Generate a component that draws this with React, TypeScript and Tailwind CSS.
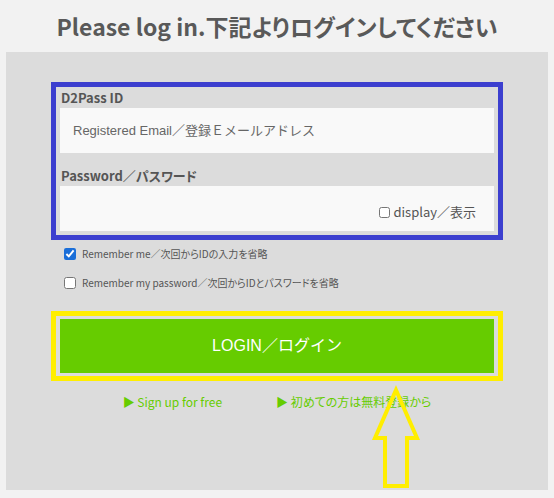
export default function App() {
  const jp = { fontFamily: '"Noto Sans CJK JP", sans-serif' };
  const arial = { fontFamily: '"Liberation Sans", "Noto Sans CJK JP", sans-serif' };

  return (
    <div className="relative w-[554px] h-[498px] overflow-hidden bg-[#f2f2f2]" style={jp}>
      <h1 className="h-[52px] flex items-center justify-center text-[23px] font-bold text-[#595959] [font-feature-settings:'palt']">
        Please log in.下記よりログインしてください
      </h1>

      <div className="mx-[6px] h-[438px] bg-[#dcdcdc] pt-[30px] px-[45px]">
        {/* credentials box */}
        <div className="border-[5px] border-[#3c3fcf] px-[4px] pb-[4px]">
          <div className="h-[21px] pt-[1px] leading-[20px] pl-[1px] text-[13px] font-bold text-[#555] [font-feature-settings:'palt']">
            D2Pass ID
          </div>
          <input
            type="text"
            placeholder="Registered Email／登録Ｅメールアドレス"
            className="block w-full h-[45px] bg-[#f9f9f9] pl-[13px] text-[13px] text-[#555] placeholder:text-[#666] outline-none [font-feature-settings:normal]"
            style={arial}
          />
          <div className="mt-[13px] h-[20px] leading-[20px] pl-[1px] text-[13px] font-bold text-[#555] [font-feature-settings:'palt']">
            Password／パスワード
          </div>
          <div className="h-[45px] bg-[#f9f9f9] flex items-center justify-end pr-[18px] pt-[7px]">
            <label className="flex items-center gap-[3px] text-[13px] text-[#555]">
              <input type="checkbox" className="w-[11px] h-[11px] m-0" />
              display／表示
            </label>
          </div>
        </div>

        {/* remember options */}
        <div className="pt-[7px] pl-[13px] text-[10px] text-[#555] [font-feature-settings:'palt']">
          <label className="h-[13px] flex items-center gap-[6px]">
            <input type="checkbox" defaultChecked className="w-[12px] h-[12px] m-0 accent-[#1a6ed8]" />
            Remember me／次回からIDの入力を省略
          </label>
          <label className="mt-[16px] h-[13px] flex items-center gap-[6px]">
            <input type="checkbox" className="w-[12px] h-[12px] m-0" />
            Remember my password／次回からIDとパスワードを省略
          </label>
        </div>

        {/* login button */}
        <div className="mt-[22px] border-[5px] border-[#ffee00] px-[4px] py-[3px]">
          <button
            type="button"
            className="w-full h-[54px] bg-[#66cc00] text-white text-[16px] flex items-center justify-center"
            style={arial}
          >
            LOGIN／ログイン
          </button>
        </div>

        <div className="mt-[12px] flex justify-center gap-[54px] text-[12px] text-[#66cc00] [font-feature-settings:'palt']">
          <span>▶ Sign up for free</span>
          <span>▶ 初めての方は無料登録から</span>
        </div>
      </div>

      {/* annotation arrow */}
      <svg className="absolute left-0 top-0 pointer-events-none" width="554" height="498">
        <polygon
          points="396,390 417,438 407,438 407,486 385,486 385,438 375,438"
          fill="none"
          stroke="#ffee00"
          strokeWidth="4"
          strokeLinejoin="miter"
        />
      </svg>
    </div>
  );
}
